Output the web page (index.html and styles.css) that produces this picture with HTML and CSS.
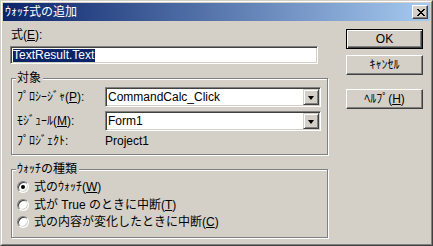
FILE: index.html
```html
<!DOCTYPE html>
<html>
<head>
    <meta charset="utf-8">
    <title>ｳｫｯﾁ式の追加</title>
    <link rel="stylesheet" href="styles.css">
</head>
<body>
    <div class="window">
        <div class="frame">
            <div class="caption">
                <span class="caption-text">ｳｫｯﾁ式の追加</span>
                <div class="close-btn">
                    <svg width="8" height="7" viewBox="0 0 8 7">
                        <path d="M0 0h2v1h-2zM6 0h2v1h-2zM1 1h2v1h-2zM5 1h2v1h-2zM2 2h4v1h-4zM3 3h2v1h-2zM2 4h4v1h-4zM1 5h2v1h-2zM5 5h2v1h-2zM0 6h2v1h-2zM6 6h2v1h-2z" fill="#000"/>
                    </svg>
                </div>
            </div>

            <div class="content">
                <div class="left">
                    <div class="field-label">式(<u>E</u>):</div>
                    <div class="textbox"><span class="selected">TextResult.Text</span></div>

                    <div class="group group-target">
                        <div class="group-title">対象</div>
                        <div class="row">
                            <span class="row-label">ﾌﾟﾛｼｰｼﾞｬ(<u>P</u>):</span>
                            <div class="combo">
                                <span class="combo-text">CommandCalc_Click</span>
                                <div class="drop-btn"><span class="arrow"></span></div>
                            </div>
                        </div>
                        <div class="row">
                            <span class="row-label">ﾓｼﾞｭｰﾙ(<u>M</u>):</span>
                            <div class="combo">
                                <span class="combo-text">Form1</span>
                                <div class="drop-btn"><span class="arrow"></span></div>
                            </div>
                        </div>
                        <div class="row row-short">
                            <span class="row-label">ﾌﾟﾛｼﾞｪｸﾄ:</span>
                            <span class="row-value">Project1</span>
                        </div>
                    </div>

                    <div class="group group-kind">
                        <div class="group-title">ｳｫｯﾁの種類</div>
                        <div class="radio-row">
                            <span class="radio checked"></span>
                            <span>式のｳｫｯﾁ(<u>W</u>)</span>
                        </div>
                        <div class="radio-row">
                            <span class="radio"></span>
                            <span>式が True のときに中断(<u>T</u>)</span>
                        </div>
                        <div class="radio-row">
                            <span class="radio"></span>
                            <span>式の内容が変化したときに中断(<u>C</u>)</span>
                        </div>
                    </div>
                </div>

                <div class="buttons">
                    <div class="btn default">OK</div>
                    <div class="btn">ｷｬﾝｾﾙ</div>
                    <div class="btn btn-help">ﾍﾙﾌﾟ(<u>H</u>)</div>
                </div>
            </div>
        </div>
    </div>
</body>
</html>
```

FILE: styles.css
```css
* {
    box-sizing: border-box;
    margin: 0;
    padding: 0;
}

body {
    width: 433px;
    height: 246px;
    overflow: hidden;
    background: #d4d0c8;
    font-family: "Liberation Sans", "Noto Sans CJK JP", sans-serif;
    font-size: 12px;
    line-height: 14px;
    color: #000;
}

u {
    text-decoration: underline;
    text-underline-offset: 1px;
}

.window {
    width: 433px;
    height: 246px;
    border: 1px solid;
    border-color: #d4d0c8 #404040 #404040 #d4d0c8;
    background: #d4d0c8;
}

.frame {
    height: 100%;
    border: 1px solid;
    border-color: #fff #808080 #808080 #fff;
    padding: 1px;
}

/* title bar */
.caption {
    height: 18px;
    display: flex;
    align-items: center;
    justify-content: space-between;
    padding-left: 2px;
    padding-right: 2px;
    background: linear-gradient(to right, #0a246a, #a6caf0);
    color: #fff;
}

.close-btn {
    width: 16px;
    height: 14px;
    display: flex;
    align-items: center;
    justify-content: center;
    background: #d4d0c8;
    border: 1px solid;
    border-color: #fff #404040 #404040 #fff;
    box-shadow: inset -1px -1px #808080;
    padding-left: 1px;
}

.content {
    display: flex;
    padding-left: 7px;
}

.left {
    width: 318px;
}

.field-label {
    margin-top: 7px;
    margin-left: 1px;
    height: 14px;
}

/* sunken edit box */
.textbox {
    margin-top: 4px;
    width: 308px;
    height: 18px;
    background: #fff;
    border: 1px solid;
    border-color: #808080 #fff #fff #808080;
    box-shadow: inset 1px 1px #404040, inset -1px -1px #d4d0c8;
    padding: 2px 0 0 2px;
    display: flex;
}

.selected {
    background: #0a246a;
    color: #fff;
    line-height: 13px;
    height: 13px;
    padding-right: 1px;
}

/* etched group box */
.group {
    margin-left: 1px;
    width: 317px;
    border: 1px solid #808080;
    box-shadow: inset 1px 1px #fff, 1px 1px #fff;
}

.group-target {
    margin-top: 14px;
    height: 77px;
}

.group-kind {
    margin-top: 14px;
    height: 69px;
}

.group-title {
    width: fit-content;
    margin: -8px 0 0 4px;
    padding: 0 2px 0 1px;
    height: 14px;
    background: #d4d0c8;
}

.group-target .group-title {
    margin-bottom: 0;
}

.row {
    display: flex;
    align-items: center;
    height: 24px;
    padding-left: 5px;
}

.row-short {
    height: 16px;
}

.row-label {
    width: 88px;
}

.combo {
    width: 216px;
    height: 20px;
    display: flex;
    align-items: center;
    justify-content: space-between;
    background: #fff;
    border: 1px solid;
    border-color: #808080 #fff #fff #808080;
    box-shadow: inset 1px 1px #404040, inset -1px -1px #d4d0c8;
    padding: 1px 1px 1px 2px;
}

.drop-btn {
    width: 16px;
    height: 16px;
    display: flex;
    align-items: center;
    justify-content: center;
    background: #d4d0c8;
    border: 1px solid;
    border-color: #d4d0c8 #404040 #404040 #d4d0c8;
    box-shadow: inset 1px 1px #fff, inset -1px -1px #808080;
}

.arrow {
    width: 0;
    height: 0;
    border-left: 3.5px solid transparent;
    border-right: 3.5px solid transparent;
    border-top: 4px solid #000;
    margin-top: 1px;
}

.group-kind .group-title {
    margin-bottom: 2px;
}

.radio-row {
    display: flex;
    align-items: center;
    height: 18px;
    padding-left: 5px;
}

.radio-row:nth-of-type(3) {
    height: 17px;
}

.radio {
    position: relative;
    width: 12px;
    height: 12px;
    margin-right: 5px;
    border-radius: 50%;
    background: #fff;
    border: 1px solid;
    border-color: #808080 #fff #fff #808080;
    box-shadow: inset 1px 1px #404040, inset -1px -1px #d4d0c8;
}

.radio.checked::after {
    content: "";
    position: absolute;
    left: 3px;
    top: 3px;
    width: 4px;
    height: 4px;
    border-radius: 50%;
    background: #000;
}

/* push buttons */
.buttons {
    margin-left: 18px;
    display: flex;
    flex-direction: column;
}

.btn {
    width: 77px;
    height: 20px;
    margin-top: 6px;
    display: flex;
    align-items: center;
    justify-content: center;
    border: 1px solid;
    border-color: #fff #404040 #404040 #fff;
    box-shadow: inset -1px -1px #808080;
}

.btn.default {
    margin-top: 8px;
    border-color: #000;
    box-shadow: inset 1px 1px #fff, inset -1px -1px #404040, inset -2px -2px #808080;
}

.btn-help {
    margin-top: 14px;
}
```
